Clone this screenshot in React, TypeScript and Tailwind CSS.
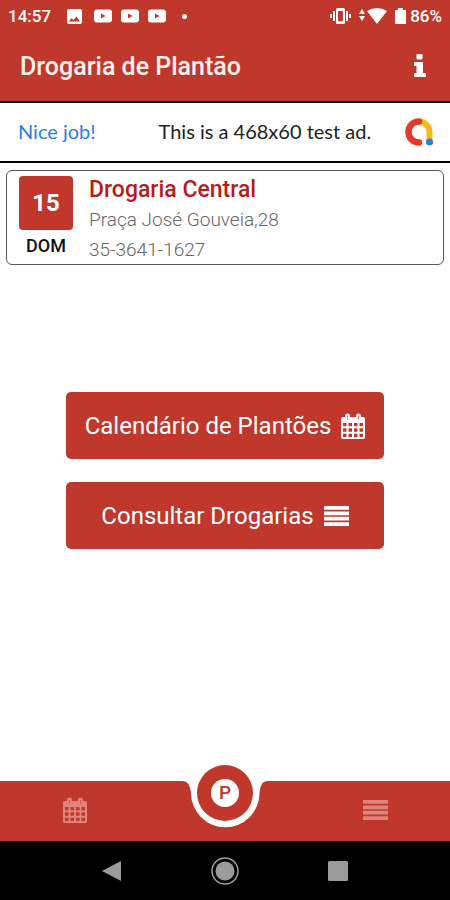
import React from "react";

function CalendarIcon({ className }: { className: string }) {
  return (
    <svg viewBox="0 0 24 26" className={className} fill="currentColor" aria-hidden="true">
      <path
        fillRule="evenodd"
        d="M2 4H4V3a2.500 2.500 0 0 1 5 0V4H15V3a2.500 2.500 0 0 1 5 0V4H22a2 2 0 0 1 2 2V24a2 2 0 0 1-2 2H2a2 2 0 0 1-2-2V6a2 2 0 0 1 2-2ZM2 10V13.300H5.500V10ZM7.500 10V13.300H11V10ZM13 10V13.300H16.500V10ZM18.500 10V13.300H22V10ZM2 15.300V18.700H5.500V15.300ZM7.500 15.300V18.700H11V15.300ZM13 15.300V18.700H16.500V15.300ZM18.500 15.300V18.700H22V15.300ZM2 20.700V24H5.500V20.700ZM7.500 20.700V24H11V20.700ZM13 20.700V24H16.500V20.700ZM18.500 20.700V24H22V20.700ZM6.200 3V6.500H6.800V3ZM17.200 3V6.500H17.800V3Z"
      />
    </svg>
  );
}

function ListIcon({ className }: { className: string }) {
  return (
    <svg viewBox="0 0 25 20" className={className} fill="currentColor" aria-hidden="true">
      <path d="M0 0H25V3.800H0ZM0 5.400H25V9.200H0ZM0 10.800H25V14.600H0ZM0 16.200H25V20H0Z" />
    </svg>
  );
}

function VideoIcon() {
  return (
    <svg viewBox="0 0 18 14" className="h-[14px] w-[18px]" aria-hidden="true">
      <path
        fill="currentColor"
        fillRule="evenodd"
        d="M3 0.500H15a3 3 0 0 1 3 3V10.500a3 3 0 0 1-3 3H3a3 3 0 0 1-3-3V3.500a3 3 0 0 1 3-3ZM7 4.500V9.500L11.500 7Z"
      />
    </svg>
  );
}

function StatusBar() {
  return (
    <div className="flex h-8 items-center justify-between px-2 text-[17px] font-medium">
      <div className="flex items-center">
        <span className="w-[59px] pt-[2px]">14:57</span>
        <svg viewBox="0 0 15 15" className="mr-3 h-[15px] w-[15px]" aria-hidden="true">
          <path
            fill="currentColor"
            fillRule="evenodd"
            d="M2 0H13a2 2 0 0 1 2 2V13a2 2 0 0 1-2 2H2a2 2 0 0 1-2-2V2a2 2 0 0 1 2-2ZM2 12.500H13L9.500 7.500L6.500 11L4.500 9Z"
          />
        </svg>
        <div className="flex gap-[9px]">
          <VideoIcon />
          <VideoIcon />
          <VideoIcon />
        </div>
        <span className="ml-4 size-[5px] rounded-full bg-current" />
      </div>
      <div className="flex items-center">
        <svg viewBox="0 0 21 16" className="mr-2 h-4 w-[21px]" aria-hidden="true">
          <path
            fill="currentColor"
            fillRule="evenodd"
            d="M7.500 0H13.500a1.500 1.500 0 0 1 1.500 1.500V14.500a1.500 1.500 0 0 1-1.500 1.500H7.500a1.500 1.500 0 0 1-1.500-1.500V1.500a1.500 1.500 0 0 1 1.500-1.500ZM8 3V13H13V3ZM3 3H5V13H3ZM16 3H18V13H16ZM0 6H2V10H0ZM19 6H21V10H19Z"
          />
        </svg>
        <svg viewBox="0 0 28 16" className="mr-2 h-4 w-7" fill="currentColor" aria-hidden="true">
          <path d="M3 1L6 6H0ZM0 8H6L3 13ZM8 3Q18 -3 28 3L18 16Z" />
        </svg>
        <svg viewBox="0 0 11 16" className="mr-1 h-4 w-[11px]" fill="currentColor" aria-hidden="true">
          <path d="M3 0H8V2H11V16H0V2H3Z" />
        </svg>
        <span className="pt-[2px]">86%</span>
      </div>
    </div>
  );
}

function AdBanner() {
  return (
    <aside className="flex h-[62px] items-center justify-between border-y-2 border-black bg-white pr-4 pl-[18px] font-['Lato','Open_Sans',sans-serif] text-[20px]">
      <a href="#anuncio" className="pb-[2px] text-[#2b7de9]">
        Nice job!
      </a>
      <span className="ml-[30px] pb-[2px] text-[#222]">This is a 468x60 test ad.</span>
      <svg viewBox="0 0 30 30" className="h-[30px] w-[30px]" fill="none" aria-hidden="true">
        <path d="M15 4.500A10.500 10.500 0 0 1 25.500 15V24" stroke="#fbb917" strokeWidth="6" />
        <path d="M15 4.500A10.500 10.500 0 0 0 15 25.500" stroke="#e5392c" strokeWidth="6.500" strokeLinecap="round" />
        <circle cx="25.500" cy="25" r="3.500" fill="#2b7de9" />
      </svg>
    </aside>
  );
}

function PharmacyCard() {
  return (
    <article className="mx-[6px] mt-[7px] flex h-[95px] gap-4 rounded-md border border-[#555] pl-3">
      <div className="flex w-[54px] flex-col items-center pt-[5px] font-medium">
        <span className="flex h-[54px] w-full items-center justify-center rounded-sm bg-[#c0382b] text-[24px] font-bold text-white">
          15
        </span>
        <span className="mt-[3px] text-[18px] leading-[26px] text-[#111]">DOM</span>
      </div>
      <div className="pt-[4px] text-[19px] font-light text-[#666]">
        <h2 className="text-[23px] leading-[30px] font-medium text-[#b71c1c]">Drogaria Central</h2>
        <p className="leading-[30px]">Praça José Gouveia,28</p>
        <p className="leading-[30px]">35-3641-1627</p>
      </div>
    </article>
  );
}

const actionClass =
  "flex h-[67px] w-full items-center justify-center gap-[10px] rounded-[5px] bg-[#c0382b] text-[24px] text-white";

function TabBar() {
  return (
    <nav className="relative flex h-[60px] shrink-0 text-[#e0837b]">
      <button
        aria-label="Calendário"
        className="flex flex-1 items-center justify-center bg-[#c0382b] pr-[30px] pb-[2px]"
      >
        <CalendarIcon className="h-[26px] w-6" />
      </button>
      <svg viewBox="0 0 90 60" className="h-[60px] w-[90px] text-[#c0382b]" aria-hidden="true">
        <path
          fill="currentColor"
          d="M0 0H2C8 0 10 4 11 12A34 34 0 0 0 79.500 12C80.500 4 82 0 88 0H90V60H0Z"
        />
      </svg>
      <button
        aria-label="Drogarias"
        className="flex flex-1 items-center justify-center bg-[#c0382b] pb-[2px] pl-[30px]"
      >
        <ListIcon className="h-5 w-[25px]" />
      </button>
      <button
        aria-label="Plantão"
        className="absolute top-[-16px] left-1/2 flex size-14 -translate-x-1/2 items-center justify-center rounded-full bg-[#c0382b]"
      >
        <span className="flex size-7 items-center justify-center rounded-full bg-white text-[19px] font-medium text-[#c0382b]">
          P
        </span>
      </button>
    </nav>
  );
}

function SystemNav() {
  return (
    <div className="flex h-[59px] shrink-0 items-center justify-center gap-[85px] bg-black text-[#9b9b9b]">
      <button aria-label="Voltar">
        <svg viewBox="0 0 28 28" className="size-7" fill="currentColor" aria-hidden="true">
          <path d="M4 14L23 4V24Z" />
        </svg>
      </button>
      <button aria-label="Início">
        <svg viewBox="0 0 28 28" className="size-7" aria-hidden="true">
          <circle cx="14" cy="14" r="13" fill="none" stroke="currentColor" strokeWidth="1.500" />
          <circle cx="14" cy="14" r="9.500" fill="currentColor" />
        </svg>
      </button>
      <button aria-label="Recentes">
        <svg viewBox="0 0 28 28" className="size-7" fill="currentColor" aria-hidden="true">
          <rect x="4" y="4" width="20" height="20" rx="1.500" />
        </svg>
      </button>
    </div>
  );
}

export default function App() {
  return (
    <div className="flex min-h-screen flex-col bg-white font-['Roboto',sans-serif]">
      <div className="bg-[#c0382b] text-white">
        <StatusBar />
        <header className="flex h-[69px] items-center justify-between pr-6 pl-5">
          <h1 className="text-[25px] font-medium text-[#fff0ee]">Drogaria de Plantão</h1>
          <button aria-label="Informações" className="pb-[2px]">
            <svg viewBox="0 0 12 23" className="h-[23px] w-3" fill="currentColor" aria-hidden="true">
              <path d="M3.500 0H7.500a1 1 0 0 1 1 1V4.500a1 1 0 0 1-1 1H3.500a1 1 0 0 1-1-1V1a1 1 0 0 1 1-1ZM1 8H8a1 1 0 0 1 1 1V19H11a1 1 0 0 1 1 1V22a1 1 0 0 1-1 1H1a1 1 0 0 1-1-1V20a1 1 0 0 1 1-1H2.500V12H1a1 1 0 0 1-1-1V9a1 1 0 0 1 1-1Z" />
            </svg>
          </button>
        </header>
      </div>
      <AdBanner />
      <PharmacyCard />
      <main className="mx-auto mt-[127px] flex w-[70.5%] flex-1 flex-col gap-[23px]">
        <button className={actionClass}>
          Calendário de Plantões
          <CalendarIcon className="h-[26px] w-6" />
        </button>
        <button className={actionClass}>
          Consultar Drogarias
          <ListIcon className="h-5 w-[25px]" />
        </button>
      </main>
      <TabBar />
      <SystemNav />
    </div>
  );
}
